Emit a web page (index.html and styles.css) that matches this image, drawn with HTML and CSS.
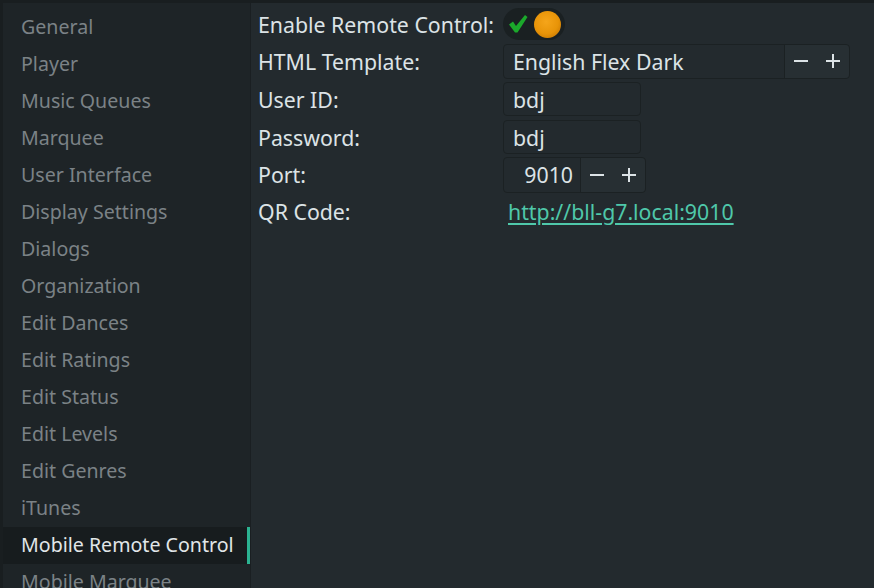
FILE: index.html
```html
<!DOCTYPE html>
<html>
<head>
<meta charset="utf-8">
<link rel="stylesheet" href="styles.css">
</head>
<body>
<div class="window">
  <nav class="sidebar">
    <div class="item">General</div>
    <div class="item">Player</div>
    <div class="item">Music Queues</div>
    <div class="item">Marquee</div>
    <div class="item">User Interface</div>
    <div class="item">Display Settings</div>
    <div class="item">Dialogs</div>
    <div class="item">Organization</div>
    <div class="item">Edit Dances</div>
    <div class="item">Edit Ratings</div>
    <div class="item">Edit Status</div>
    <div class="item">Edit Levels</div>
    <div class="item">Edit Genres</div>
    <div class="item">iTunes</div>
    <div class="item active">Mobile Remote Control</div>
    <div class="item">Mobile Marquee</div>
  </nav>
  <main class="content">
    <div class="form">
      <div class="row r1">
        <div class="label">Enable Remote Control:</div>
        <div class="switch">
          <svg class="check" width="20" height="20" viewBox="0 0 20 20"><path d="M1 10.5 L5 7.5 L8 12 L17 1 L19.5 3 L9.5 18.5 L7 18.5 Z" fill="#1ba82b"/></svg>
          <span class="knob"></span>
        </div>
      </div>
      <div class="row r2">
        <div class="label">HTML Template:</div>
        <div class="spin wide">
          <div class="value">English Flex Dark</div>
          <div class="btns">
            <span class="btn"><svg width="16" height="16" viewBox="0 0 16 16"><path d="M1 8 H15" stroke="#dce3e6" stroke-width="2"/></svg></span>
            <span class="btn"><svg width="16" height="16" viewBox="0 0 16 16"><path d="M1 8 H15 M8 1 V15" stroke="#dce3e6" stroke-width="2"/></svg></span>
          </div>
        </div>
      </div>
      <div class="row r3">
        <div class="label">User ID:</div>
        <div class="entry">bdj</div>
      </div>
      <div class="row r4">
        <div class="label">Password:</div>
        <div class="entry">bdj</div>
      </div>
      <div class="row r5">
        <div class="label">Port:</div>
        <div class="spin port">
          <div class="value num">9010</div>
          <div class="btns">
            <span class="btn"><svg width="16" height="16" viewBox="0 0 16 16"><path d="M1 8 H15" stroke="#dce3e6" stroke-width="2"/></svg></span>
            <span class="btn"><svg width="16" height="16" viewBox="0 0 16 16"><path d="M1 8 H15 M8 1 V15" stroke="#dce3e6" stroke-width="2"/></svg></span>
          </div>
        </div>
      </div>
      <div class="row r6">
        <div class="label">QR Code:</div>
        <a class="link" href="#">http://bll-g7.local:9010</a>
      </div>
    </div>
  </main>
</div>
</body>
</html>
```
FILE: styles.css
```css
html, body {
  margin: 0;
  padding: 0;
  width: 874px;
  height: 588px;
  overflow: hidden;
  background: #191e20;
  font-family: "Noto Sans", "Open Sans", sans-serif;
}
.window {
  display: flex;
  height: 585px;
  padding: 3px 0 0 3px;
}
.sidebar {
  width: 247px;
  background: #1e2427;
  padding-top: 6px;
  display: flex;
  flex-direction: column;
  flex: none;
  overflow: hidden;
  font-size: 19.6px;
}
.item {
  height: 37px;
  line-height: 35px;
  padding-bottom: 2px;
  box-sizing: border-box;
  padding-left: 18px;
  color: #7b8286;
  white-space: nowrap;
  flex: none;
}
.item.active {
  background: #171c1e;
  color: #e1e6e8;
  box-shadow: inset -3px 0 0 #2bb391;
}
.content {
  flex: 1;
  background: #232a2e;
  border-left: 1px solid #1a1f22;
  padding: 3px 0 0 7px;
  color: #dce3e6;
  font-size: 21.3px;
}
.form {
  display: flex;
  flex-direction: column;
}
.row {
  display: grid;
  grid-template-columns: 245px auto;
  align-items: center;
  justify-items: start;
  height: 38px;
}
.row.r1 { height: 36px; }
.row.r5, .row.r6 { height: 37px; }
.label {
  white-space: nowrap;
}
.switch {
  width: 62px;
  height: 32px;
  border-radius: 16px;
  background: #1a2022;
  display: flex;
  align-items: center;
  box-sizing: border-box;
  padding: 0 4px 0 5px;
  justify-content: space-between;
}
.check { display: block; }
.knob {
  width: 27px;
  height: 27px;
  border-radius: 50%;
  background: radial-gradient(circle at 45% 40%, #f5a51a 0%, #e89408 55%, #b86a00 100%);
}
.spin, .entry {
  display: flex;
  border: 1px solid #1b2123;
  border-radius: 4px;
  background: #232a2e;
  box-sizing: border-box;
}
.spin.wide { width: 347px; height: 35px; }
.entry {
  width: 138px;
  height: 34px;
  align-items: center;
  padding-left: 9px;
}
.value {
  flex: 1;
  display: flex;
  align-items: center;
  padding-left: 9px;
}
.btns {
  display: flex;
  background: #272f33;
  border-left: 1px solid #1b2123;
  border-radius: 0 4px 4px 0;
  width: 64px;
  flex: none;
}
.btn {
  flex: 1;
  display: flex;
  align-items: center;
  justify-content: center;
}
.btn svg { display: block; }
.spin.port { width: 143px; height: 36px; }
.value.num { justify-content: flex-end; padding: 0 7px 0 0; width: 69px; flex: none; }
.link {
  color: #4fc8aa;
  text-decoration: underline;
  text-underline-offset: 3px;
  margin-left: 5px;
}
```
